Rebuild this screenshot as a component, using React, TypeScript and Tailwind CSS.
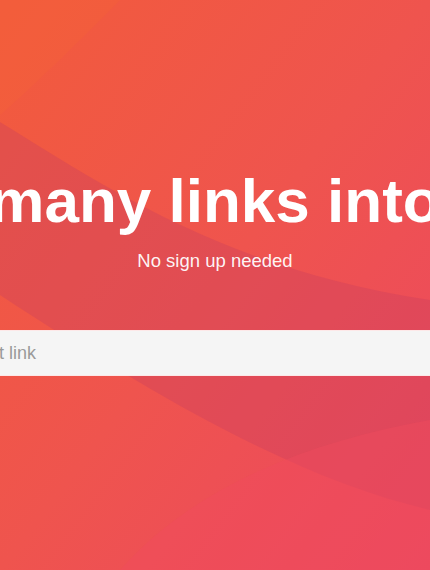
import React from "react";

export default function App() {
  return (
    <div
      className="relative h-[570px] w-full overflow-hidden bg-[#ef5549]"
      style={{ fontFamily: '"Liberation Sans", Arial, Helvetica, sans-serif' }}
    >
      <svg
        className="absolute inset-0 h-full w-full"
        viewBox="0 0 430 570"
        preserveAspectRatio="none"
        aria-hidden="true"
      >
        <defs>
          <linearGradient id="bg" x1="0" y1="0" x2="1" y2="1">
            <stop offset="0" stopColor="#f25b3c" />
            <stop offset="0.5" stopColor="#ef544e" />
            <stop offset="1" stopColor="#ec4860" />
          </linearGradient>
        </defs>
        <rect x="0" y="0" width="430" height="570" fill="url(#bg)" />
        <path d="M0,0 L120,0 C80,40 40,80 0,115 Z" fill="#f35f3a" opacity="0.5" />
        <path
          d="M0,122 C110,190 230,270 430,300 L430,510 C300,480 160,400 0,295 Z"
          fill="#c8405e"
          opacity="0.35"
        />
        <path
          d="M120,570 C200,480 320,440 430,420 L430,570 Z"
          fill="#f04b5d"
          opacity="0.45"
        />
      </svg>

      <div className="relative flex flex-col items-center pt-[170px]">
        <div className="flex w-full justify-center">
          <h1 className="shrink-0 whitespace-nowrap text-[62px] font-bold leading-[62px] text-white">
            many links into
          </h1>
        </div>
        <p className="mt-[20px] text-[18.5px] leading-[18px] text-white/95">No sign up needed</p>
        <div className="mt-[60px] flex w-full justify-center">
          <input
            type="text"
            placeholder="Paste first link"
            className="h-[46px] w-[614px] shrink-0 border-y border-[#fde8e8] bg-[#f5f5f5] pl-[16px] text-[18px] text-[#555] outline-none placeholder:text-[#9a9a9a]"
            style={{ fontFamily: '"Liberation Sans", Arial, Helvetica, sans-serif' }}
          />
        </div>
      </div>
    </div>
  );
}
